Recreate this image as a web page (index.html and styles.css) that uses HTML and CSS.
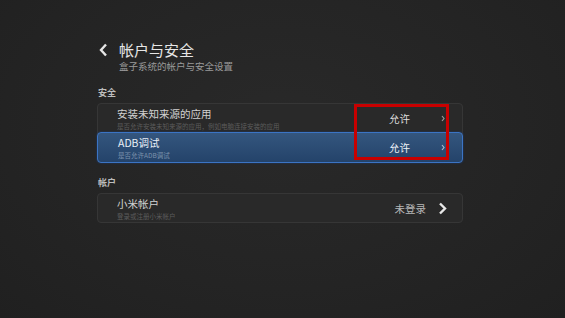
FILE: index.html
```html
<!DOCTYPE html>
<html lang="zh-CN">
  <head>
    <meta charset="UTF-8" />
    <meta name="viewport" content="width=device-width, initial-scale=1.0" />
    <title>帐户与安全</title>
    <link rel="stylesheet" href="styles.css">
  </head>
  <body>
    <div class="page">
      <!-- Header -->
      <div class="header">
        <svg class="back" width="9" height="14" viewBox="0 0 9 14">
          <path d="M7 1.5 L2 7 L7 12.5" fill="none" stroke="#e6e6e6" stroke-width="2.4" />
        </svg>
        <h1 class="title">帐户与安全</h1>
      </div>
      <p class="subtitle">盒子系统的帐户与安全设置</p>

      <!-- Security -->
      <div class="section-label">安全</div>
      <div class="card">
        <div class="row">
          <div class="row-text">
            <div class="row-title">安装未知来源的应用</div>
            <div class="row-sub">是否允许安装未知来源的应用，例如电脑连接安装的应用</div>
          </div>
          <span class="row-value">允许</span>
          <svg class="chev-small" width="4" height="7" viewBox="0 0 4 7">
            <path d="M1 1 L3 3.5 L1 6" fill="none" stroke="#9a9a9a" stroke-width="1.2" />
          </svg>
        </div>
        <div class="row selected">
          <div class="row-text">
            <div class="row-title">ADB调试</div>
            <div class="row-sub">是否允许ADB调试</div>
          </div>
          <span class="row-value">允许</span>
          <svg class="chev-small" width="4" height="7" viewBox="0 0 4 7">
            <path d="M1 1 L3 3.5 L1 6" fill="none" stroke="#a8b8cc" stroke-width="1.2" />
          </svg>
        </div>
        <div class="highlight"></div>
      </div>

      <!-- Account -->
      <div class="section-label">帐户</div>
      <div class="card">
        <div class="row">
          <div class="row-text">
            <div class="row-title">小米帐户</div>
            <div class="row-sub">登录或注册小米帐户</div>
          </div>
          <span class="row-value dim">未登录</span>
          <svg class="chev" width="9" height="13" viewBox="0 0 9 13">
            <path d="M2 1.5 L7 6.5 L2 11.5" fill="none" stroke="#e8e8e8" stroke-width="2.4" />
          </svg>
        </div>
      </div>
    </div>
  </body>
</html>
```

FILE: styles.css
```css
body {
  margin: 0;
  width: 565px;
  height: 318px;
  overflow: hidden;
  background: radial-gradient(ellipse at 50% 40%, #292929 0%, #242424 60%, #202020 100%);
  font-family: "Noto Sans CJK SC", "Noto Sans", sans-serif;
  color: #dcdcdc;
}
.page {
  width: 366px;
  margin-left: 97px;
  padding-top: 41px;
}
.header {
  display: flex;
  align-items: center;
  height: 18px;
}
.back {
  margin-left: 2px;
  margin-right: 11px;
}
.title {
  margin: 0;
  font-size: 15px;
  line-height: 18px;
  font-weight: normal;
  color: #e6e6e6;
}
.subtitle {
  margin: 1px 0 0 22px;
  font-size: 9.5px;
  line-height: 12px;
  color: #9a9a9a;
}
.section-label {
  margin-top: 14px;
  margin-left: 1px;
  margin-bottom: 4px;
  font-size: 9px;
  line-height: 13px;
  font-weight: bold;
  color: #bdbdbd;
}
.card {
  position: relative;
  border: 1px solid #363636;
  border-radius: 4px;
  background: #292929;
}
.card + .section-label {
  margin-top: 13px;
}
.row {
  display: flex;
  align-items: center;
  height: 28px;
  padding: 0 16px 0 19px;
}
.row-text {
  flex: 1;
}
.row-title {
  font-size: 10.5px;
  line-height: 15px;
  color: #d2d2d2;
}
.row-sub {
  font-size: 6.5px;
  line-height: 10px;
  color: #5c5c5c;
  white-space: nowrap;
}
.row-value {
  font-size: 10.5px;
  color: #dedede;
  margin-right: 31px;
}
.row-value.dim {
  color: #b8b8b8;
  margin-right: 12px;
}
.chev-small {
  margin-right: 1px;
}
.chev {
  margin-right: -1px;
}
.selected {
  margin: 0 -1px -1px;
  height: 29px;
  padding-left: 20px;
  border: 1px solid #3b74c4;
  border-radius: 4px;
  background: linear-gradient(#34567e, #24436a);
  box-shadow: 0 0 2px #1d3f78;
}
.selected .row-title {
  color: #e8eef6;
}
.selected .row-sub {
  color: #7d93ad;
}
.selected .row-value {
  color: #eef2f8;
}
/* annotation box drawn over the values */
.highlight {
  position: absolute;
  left: 256px;
  top: 0;
  width: 89px;
  height: 50px;
  border: 3px solid #c80000;
}
```
